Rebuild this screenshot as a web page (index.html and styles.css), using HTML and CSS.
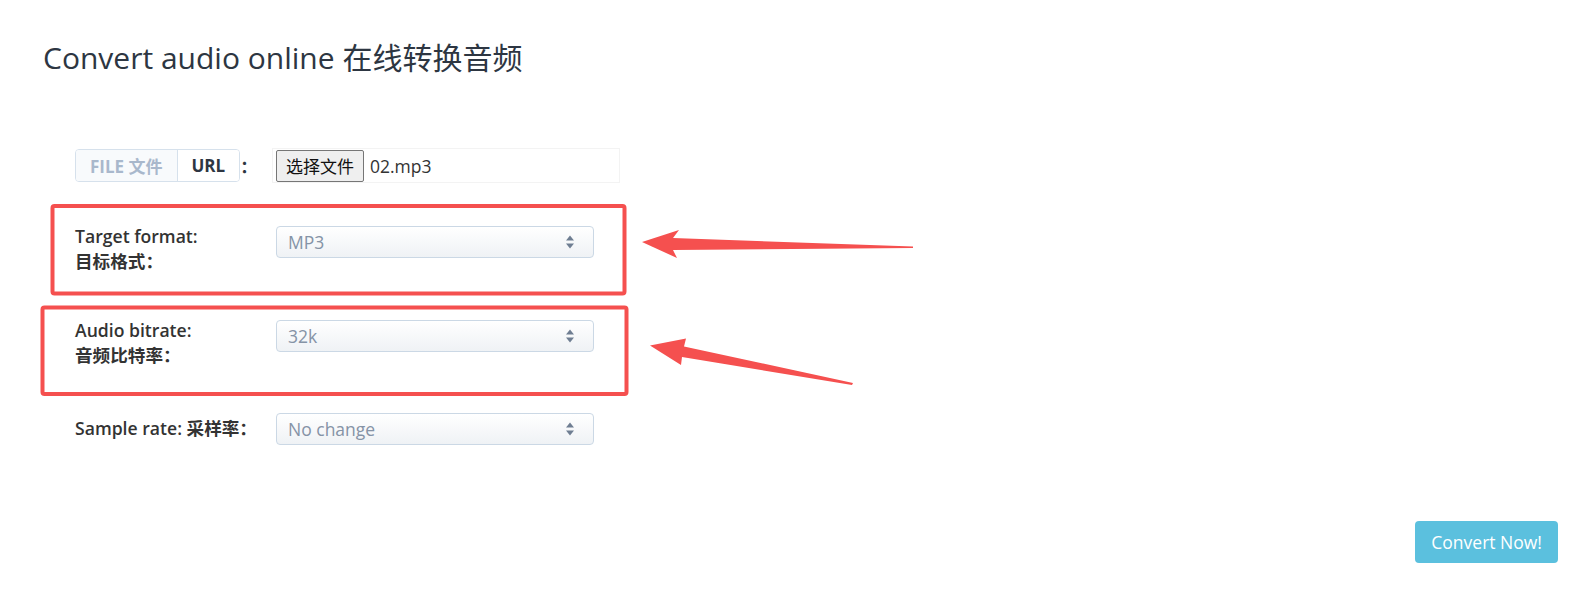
FILE: index.html
```html
<!DOCTYPE html>
<html lang="zh-CN">
<head>
<meta charset="utf-8">
<title>Convert audio online</title>
<link rel="stylesheet" href="styles.css">
</head>
<body>
<main class="page">
  <h1 class="title">Convert audio online 在线转换音频</h1>

  <form class="form">
    <div class="row row-file">
      <div class="source">
        <div class="tabs">
          <span class="tab tab-file">FILE 文件</span>
          <span class="tab tab-url">URL</span>
        </div>
        <span class="colon">：</span>
      </div>
      <div class="file-box">
        <span class="file-btn">选择文件</span>
        <span class="file-name">02.mp3</span>
      </div>
    </div>

    <div class="row">
      <div class="label">Target format:<br><span class="cjk">目标格式：</span></div>
      <div class="select">
        <span class="select-value">MP3</span>
        <svg class="caret" width="10" height="16" viewBox="0 0 10 16"><path d="M5 1.5 L9 6.5 H1 Z M5 14.5 L9 9.5 H1 Z" fill="#6f7e92"/></svg>
      </div>
    </div>

    <div class="row">
      <div class="label">Audio bitrate:<br><span class="cjk">音频比特率：</span></div>
      <div class="select">
        <span class="select-value">32k</span>
        <svg class="caret" width="10" height="16" viewBox="0 0 10 16"><path d="M5 1.5 L9 6.5 H1 Z M5 14.5 L9 9.5 H1 Z" fill="#6f7e92"/></svg>
      </div>
    </div>

    <div class="row">
      <div class="label label-one">Sample rate: <span class="cjk">采样率：</span></div>
      <div class="select">
        <span class="select-value">No change</span>
        <svg class="caret" width="10" height="16" viewBox="0 0 10 16"><path d="M5 1.5 L9 6.5 H1 Z M5 14.5 L9 9.5 H1 Z" fill="#6f7e92"/></svg>
      </div>
    </div>
  </form>

  <div class="actions">
    <button type="button" class="convert">Convert Now!</button>
  </div>

  <svg class="annotations" width="1579" height="604" viewBox="0 0 1579 604">
    <rect x="52.5" y="206" width="572" height="87.5" rx="2" fill="none" stroke="#f5504f" stroke-width="4"/>
    <rect x="42.5" y="307.5" width="584" height="86.5" rx="2" fill="none" stroke="#f5504f" stroke-width="4"/>
    <polygon points="642,242 679,230 673,238 913,246.5 913,248 673,250 677,258" fill="#f5504f"/>
    <polygon points="650,345.5 686,338.5 684,346.5 853,383 852,385 682,357 681,365" fill="#f5504f"/>
  </svg>
</main>
</body>
</html>
```

FILE: styles.css
```css
* { box-sizing: border-box; }

html, body {
  margin: 0;
  padding: 0;
  background: #ffffff;
}

body {
  font-family: "Open Sans", "Noto Sans CJK SC", sans-serif;
  color: #333333;
}

.page {
  position: relative;
  width: 1579px;
  height: 604px;
  padding: 38px 21px 0 43px;
}

.title {
  margin: 0;
  font-size: 30px;
  line-height: 40px;
  font-weight: 400;
  color: #2d3642;
}

.form {
  margin: 71px 0 0 32px;
  display: flex;
  flex-direction: column;
}

.row {
  display: flex;
  align-items: flex-start;
  min-height: 93.5px;
}

.row-file {
  min-height: 0;
  height: 33px;
  margin-bottom: 44px;
  align-items: center;
}

.source {
  width: 197px;
  display: flex;
  align-items: center;
}

.tabs {
  display: flex;
  height: 33px;
  border: 1px solid #d6e1ec;
  border-radius: 4px;
  overflow: hidden;
}

.tab {
  display: flex;
  align-items: center;
  padding: 0 14px;
  font-size: 17px;
  font-weight: 700;
}

.tab-file {
  background: #f8fafc;
  color: #a9b8cc;
  border-right: 1px solid #d6e1ec;
}

.tab-url {
  background: #ffffff;
  color: #2d3642;
}

.colon {
  font-size: 17px;
  font-weight: 700;
  color: #2d3642;
}

.file-box {
  display: flex;
  align-items: center;
  width: 348px;
  height: 35px;
  padding-left: 3px;
  border: 1px solid #f3f3f3;
}

.file-btn {
  display: flex;
  align-items: center;
  height: 32px;
  padding: 0 9px;
  background: #efefef;
  border: 1px solid #767676;
  border-radius: 2px;
  font-family: "Noto Sans CJK SC", sans-serif;
  font-size: 17px;
  color: #111111;
}

.file-name {
  margin-left: 6px;
  font-size: 17.5px;
  color: #333333;
}

.label {
  width: 201px;
  margin-top: -2px;
  font-size: 17.6px;
  line-height: 25px;
  font-weight: 600;
  color: #333333;
}

.label .cjk {
  font-weight: 700;
}

.label-one {
  margin-top: 3px;
}

.select {
  width: 318px;
  height: 32px;
  display: flex;
  align-items: center;
  justify-content: space-between;
  padding: 0 18px 0 11px;
  border: 1px solid #cbd8e5;
  border-radius: 4px;
  background: linear-gradient(#ffffff, #eff2f5);
}

.select-value {
  font-size: 17.5px;
  color: #8593a6;
}

.actions {
  display: flex;
  justify-content: flex-end;
  margin-top: 14px;
}

.convert {
  height: 42px;
  padding: 0 16px;
  border: none;
  border-radius: 4px;
  background: #5bc0de;
  color: #ffffff;
  font-family: "Open Sans", sans-serif;
  font-size: 17.5px;
}

.annotations {
  position: absolute;
  left: 0;
  top: 0;
  pointer-events: none;
}
```
